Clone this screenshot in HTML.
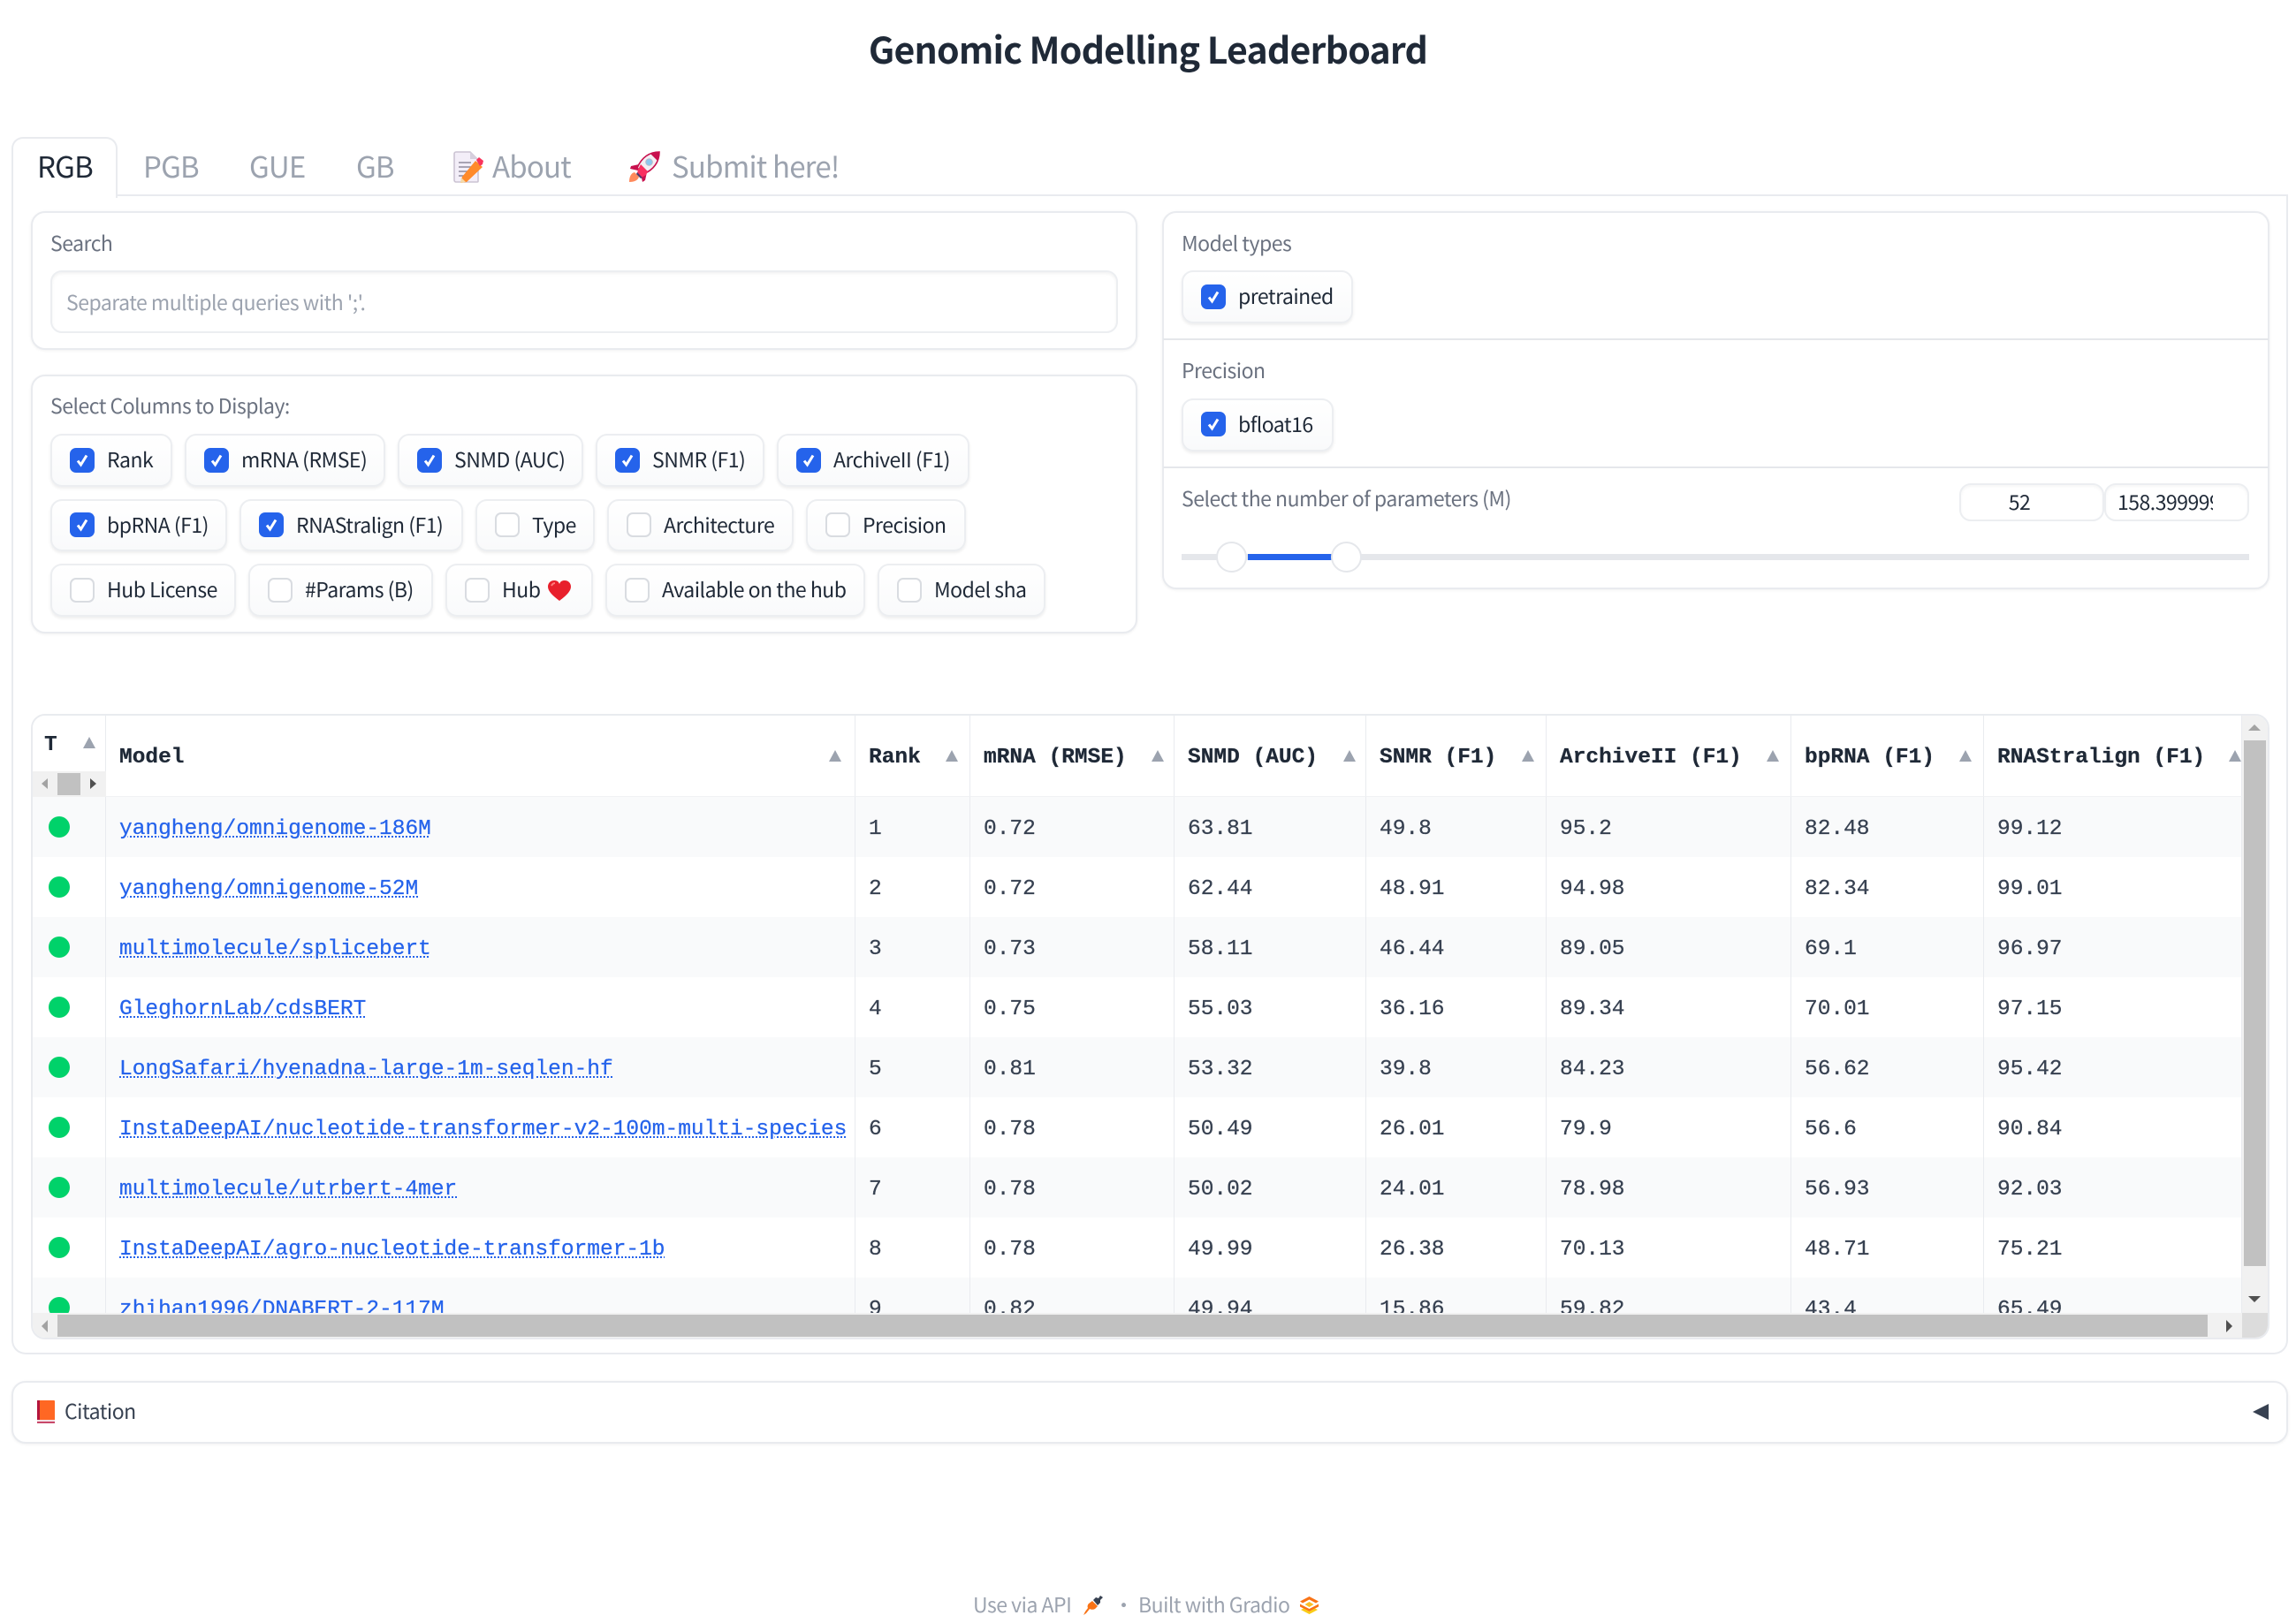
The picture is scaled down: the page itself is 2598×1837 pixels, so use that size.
<!DOCTYPE html>
<html lang="en">
<head>
<meta charset="utf-8">
<title>Genomic Modelling Leaderboard</title>
<style>
html,body{margin:0;padding:0;background:#fff}
body{position:relative;width:2598px;height:1837px;overflow:hidden;font-family:"Noto Sans CJK SC","Liberation Sans",sans-serif;color:#1f2937}
.a{position:absolute;box-sizing:border-box}
.t{position:absolute;white-space:nowrap;line-height:40px;height:40px;letter-spacing:-.5px}
.card{position:absolute;box-sizing:border-box;background:#fff;border:2px solid #e9ebef;border-radius:16px;box-shadow:0 1px 3px rgba(0,0,0,.06)}
.lb{font-size:23px;color:#6b7280}
.tab{font-size:33px;color:#9ca3af;letter-spacing:-.8px}
.chip{position:absolute;box-sizing:border-box;border:2px solid #eceef1;border-radius:13px;background:linear-gradient(#fff,#f9fafb);box-shadow:0 2px 3px rgba(0,0,0,.07)}
.ct{position:absolute;white-space:nowrap;font-size:23px;letter-spacing:-.5px;line-height:40px;height:40px;color:#1f2937}
.cb{position:absolute;box-sizing:border-box;width:28px;height:28px;border-radius:7px;background:#2563eb}
.cb svg{position:absolute;left:4px;top:5px}
.ub{position:absolute;box-sizing:border-box;width:28px;height:28px;border-radius:7px;background:#fff;border:2px solid #d9dce1}
.tw{position:absolute;left:35px;top:808px;width:2533px;height:708px;box-sizing:border-box;border:2px solid #e9ebef;border-radius:16px;overflow:hidden;background:#fff}
table{position:absolute;left:-1px;top:0;border-collapse:separate;border-spacing:0;table-layout:fixed;width:2501px;font-family:"Liberation Mono",monospace;font-size:24.5px;color:#374151;-webkit-text-stroke:.25px}
th{height:92px;padding:4px 0 0 15px;text-align:left;font-weight:700;color:#1f2937;border-right:1px solid #e9ebef;border-bottom:1px solid #f1f2f4;background:#fff;box-sizing:border-box}
td{height:68px;padding:4px 0 0 15px;border-right:1px solid #e9ebef;box-sizing:border-box;white-space:nowrap;overflow:hidden}
tr:nth-child(odd) td{background:#f9fafb}
td a{color:#2563eb;text-decoration:underline dotted 2px;text-underline-offset:3px}
.d{display:block;position:relative;top:-2px;width:24px;height:24px;border-radius:50%;background:#00d26a;margin-left:4px}
.tri{position:absolute;top:849px;width:0;height:0;border-left:7.5px solid transparent;border-right:7.5px solid transparent;border-bottom:13px solid #9ca3af}
</style>
</head>
<body>

<div class="t" style="left:0;width:2598px;text-align:center;top:30px;height:48px;line-height:48px;font-size:41px;font-weight:700;letter-spacing:-.8px;color:#1f2937">Genomic Modelling Leaderboard</div>

<!-- tabs -->
<div class="a" style="left:13px;top:221px;width:2576px;height:1312px;border:2px solid #e9ebef;border-top:none;border-radius:0 0 16px 16px"></div>
<div class="a" style="left:13px;top:220px;width:2576px;height:2px;background:#e9ebef"></div>
<div class="a" style="left:13px;top:155px;width:120px;height:69px;background:#fff;border:2px solid #e9ebef;border-bottom:none;border-radius:13px 13px 0 0"></div>
<div class="t tab" style="left:42px;top:167px;color:#1f2937">RGB</div>
<div class="t tab" style="left:162px;top:167px">PGB</div>
<div class="t tab" style="left:282px;top:167px">GUE</div>
<div class="t tab" style="left:403px;top:167px">GB</div>
<svg class="a" style="left:513px;top:171px" width="34" height="36" viewBox="0 0 34 36">
<path d="M1 3a2 2 0 0 1 2-2h16l9 9v24a1 1 0 0 1-1 1H3a2 2 0 0 1-2-2z" fill="#f3eef8" stroke="#cbc3d3" stroke-width="1.6"/>
<path d="M19 1v8h9z" fill="#d6cfdd"/>
<path d="M6 13h14M6 18h15M6 23h10M6 28h7" stroke="#8f8a9c" stroke-width="1.5"/>
<path d="M25 11l8 7-18 17-7 1 2-7z" fill="#ff8a2a"/>
<path d="M26 10l3-3 5 4-1 4-3 2z" fill="#f9345c"/>
<path d="M8 36l1-6 5 5z" fill="#f5d9a8"/>
</svg>
<div class="t tab" style="left:557px;top:167px">About</div>
<svg class="a" style="left:711px;top:171px" width="36" height="36" viewBox="0 0 36 36">
<path d="M1 35c0-6 2-10 6-11l5 5c-1 4-5 6-11 6z" fill="#ff8a5c"/>
<path d="M12 15L3 17l-1 3 9 2z" fill="#c8104e"/>
<path d="M21 24l-2 9-3 2-2-9z" fill="#c8104e"/>
<path d="M35 1C24 1 15 7 10 19l7 7c12-5 18-14 18-25z" fill="#f3eef3" stroke="#c8104e" stroke-width="1.6"/>
<path d="M35 1c-4 0-7 1-10 2l8 8c1-3 2-6 2-10z" fill="#c8104e"/>
<circle cx="23.500" cy="12.500" r="3.800" fill="#8cc8ee" stroke="#b8bcc8" stroke-width="1"/>
<path d="M14 15l-3 6-1 4 5 5 5-3 2-4z" fill="#f92f60"/>
<path d="M10 24l6 6-2 1-5-5z" fill="#4b3a6b"/>
</svg>
<div class="t tab" style="left:760px;top:167px">Submit here!</div>

<!-- search -->
<div class="card" style="left:35px;top:239px;width:1252px;height:157px"></div>
<div class="t lb" style="left:57px;top:254px">Search</div>
<div class="a" style="left:57px;top:306px;width:1208px;height:71px;border:2px solid #eceef1;border-radius:13px;background:#fff;box-shadow:inset 0 2px 3px rgba(0,0,0,.05)"></div>
<div class="t" style="left:75px;top:321px;font-size:23px;color:#9ca3af">Separate multiple queries with ';'.</div>

<!-- columns -->
<div class="card" style="left:35px;top:424px;width:1252px;height:293px"></div>
<div class="t lb" style="left:57px;top:438px">Select Columns to Display:</div>

<div class="chip" style="left:57px;top:491px;width:138px;height:60px"></div><div class="cb" style="left:79px;top:507px"><svg width="20" height="18" viewBox="0 0 20 18"><path d="M5 9.500l3.500 4.500L15 3.500" fill="none" stroke="#fff" stroke-width="3"/></svg></div><div class="ct" style="left:121px;top:499px">Rank</div>
<div class="chip" style="left:209px;top:491px;width:227px;height:60px"></div><div class="cb" style="left:231px;top:507px"><svg width="20" height="18" viewBox="0 0 20 18"><path d="M5 9.500l3.500 4.500L15 3.500" fill="none" stroke="#fff" stroke-width="3"/></svg></div><div class="ct" style="left:273px;top:499px">mRNA (RMSE)</div>
<div class="chip" style="left:450px;top:491px;width:210px;height:60px"></div><div class="cb" style="left:472px;top:507px"><svg width="20" height="18" viewBox="0 0 20 18"><path d="M5 9.500l3.500 4.500L15 3.500" fill="none" stroke="#fff" stroke-width="3"/></svg></div><div class="ct" style="left:514px;top:499px">SNMD (AUC)</div>
<div class="chip" style="left:674px;top:491px;width:191px;height:60px"></div><div class="cb" style="left:696px;top:507px"><svg width="20" height="18" viewBox="0 0 20 18"><path d="M5 9.500l3.500 4.500L15 3.500" fill="none" stroke="#fff" stroke-width="3"/></svg></div><div class="ct" style="left:738px;top:499px">SNMR (F1)</div>
<div class="chip" style="left:879px;top:491px;width:218px;height:60px"></div><div class="cb" style="left:901px;top:507px"><svg width="20" height="18" viewBox="0 0 20 18"><path d="M5 9.500l3.500 4.500L15 3.500" fill="none" stroke="#fff" stroke-width="3"/></svg></div><div class="ct" style="left:943px;top:499px">ArchiveII (F1)</div>

<div class="chip" style="left:57px;top:565px;width:200px;height:59px"></div><div class="cb" style="left:79px;top:580px"><svg width="20" height="18" viewBox="0 0 20 18"><path d="M5 9.500l3.500 4.500L15 3.500" fill="none" stroke="#fff" stroke-width="3"/></svg></div><div class="ct" style="left:121px;top:573px">bpRNA (F1)</div>
<div class="chip" style="left:271px;top:565px;width:253px;height:59px"></div><div class="cb" style="left:293px;top:580px"><svg width="20" height="18" viewBox="0 0 20 18"><path d="M5 9.500l3.500 4.500L15 3.500" fill="none" stroke="#fff" stroke-width="3"/></svg></div><div class="ct" style="left:335px;top:573px">RNAStralign (F1)</div>
<div class="chip" style="left:538px;top:565px;width:135px;height:59px"></div><div class="ub" style="left:560px;top:580px"></div><div class="ct" style="left:602px;top:573px">Type</div>
<div class="chip" style="left:687px;top:565px;width:211px;height:59px"></div><div class="ub" style="left:709px;top:580px"></div><div class="ct" style="left:751px;top:573px">Architecture</div>
<div class="chip" style="left:912px;top:565px;width:181px;height:59px"></div><div class="ub" style="left:934px;top:580px"></div><div class="ct" style="left:976px;top:573px">Precision</div>

<div class="chip" style="left:57px;top:638px;width:210px;height:60px"></div><div class="ub" style="left:79px;top:654px"></div><div class="ct" style="left:121px;top:646px">Hub License</div>
<div class="chip" style="left:281px;top:638px;width:209px;height:60px"></div><div class="ub" style="left:303px;top:654px"></div><div class="ct" style="left:345px;top:646px">#Params (B)</div>
<div class="chip" style="left:504px;top:638px;width:167px;height:60px"></div><div class="ub" style="left:526px;top:654px"></div><div class="ct" style="left:568px;top:646px">Hub</div>
<svg class="a" style="left:620px;top:657px" width="26" height="23" viewBox="0 0 26 23"><path d="M13 23C5 17 0 12 0 7c0-4 3-7 7-7 3 0 5 1 6 4 1-3 3-4 6-4 4 0 7 3 7 7 0 5-5 10-13 16z" fill="#e8202c"/><path d="M4 6c1-2 2-3 4-3" stroke="#ff7b7b" stroke-width="2" fill="none"/></svg>
<div class="chip" style="left:685px;top:638px;width:294px;height:60px"></div><div class="ub" style="left:707px;top:654px"></div><div class="ct" style="left:749px;top:646px">Available on the hub</div>
<div class="chip" style="left:993px;top:638px;width:190px;height:60px"></div><div class="ub" style="left:1015px;top:654px"></div><div class="ct" style="left:1057px;top:646px">Model sha</div>

<!-- right card -->
<div class="card" style="left:1315px;top:239px;width:1253px;height:428px"></div>
<div class="a" style="left:1316px;top:383px;width:1251px;height:2px;background:#e5e7eb"></div>
<div class="a" style="left:1316px;top:528px;width:1251px;height:2px;background:#e5e7eb"></div>
<div class="t lb" style="left:1337px;top:254px">Model types</div>
<div class="chip" style="left:1337px;top:306px;width:194px;height:60px"></div><div class="cb" style="left:1359px;top:322px"><svg width="20" height="18" viewBox="0 0 20 18"><path d="M5 9.500l3.500 4.500L15 3.500" fill="none" stroke="#fff" stroke-width="3"/></svg></div><div class="ct" style="left:1401px;top:314px">pretrained</div>
<div class="t lb" style="left:1337px;top:398px">Precision</div>
<div class="chip" style="left:1337px;top:451px;width:172px;height:60px"></div><div class="cb" style="left:1359px;top:466px"><svg width="20" height="18" viewBox="0 0 20 18"><path d="M5 9.500l3.500 4.500L15 3.500" fill="none" stroke="#fff" stroke-width="3"/></svg></div><div class="ct" style="left:1401px;top:459px">bfloat16</div>
<div class="t lb" style="left:1337px;top:543px">Select the number of parameters (M)</div>
<div class="a" style="left:2217px;top:547px;width:164px;height:43px;border:2px solid #eceef1;border-radius:13px;box-shadow:inset 0 2px 3px rgba(0,0,0,.04)"></div>
<div class="a" style="left:2381px;top:547px;width:164px;height:43px;border:2px solid #eceef1;border-radius:13px;box-shadow:inset 0 2px 3px rgba(0,0,0,.04)"></div>
<div class="t" style="left:2217px;width:136px;text-align:center;top:547px;font-size:23px">52</div>
<div class="t" style="left:2396px;width:108px;overflow:hidden;top:547px;font-size:23px">158.399999</div>
<div class="a" style="left:1337px;top:627px;width:1208px;height:7px;background:#e5e7eb"></div>
<div class="a" style="left:1412px;top:627px;width:96px;height:7px;background:#2563eb"></div>
<div class="a" style="left:1376px;top:613px;width:35px;height:35px;border-radius:50%;background:#fff;border:2px solid #e5e7eb"></div>
<div class="a" style="left:1506px;top:613px;width:35px;height:35px;border-radius:50%;background:#fff;border:2px solid #e5e7eb"></div>

<!-- results card -->
<div class="tw">
<table>
<colgroup><col style="width:84px"><col style="width:848px"><col style="width:130px"><col style="width:231px"><col style="width:217px"><col style="width:204px"><col style="width:277px"><col style="width:218px"><col style="width:292px"></colgroup>
<thead><tr><th></th><th>Model</th><th>Rank</th><th>mRNA (RMSE)</th><th>SNMD (AUC)</th><th>SNMR (F1)</th><th>ArchiveII (F1)</th><th>bpRNA (F1)</th><th>RNAStralign (F1)</th></tr></thead>
<tbody>
<tr><td><span class="d"></span></td><td><a>yangheng/omnigenome-186M</a></td><td>1</td><td>0.72</td><td>63.81</td><td>49.8</td><td>95.2</td><td>82.48</td><td>99.12</td></tr>
<tr><td><span class="d"></span></td><td><a>yangheng/omnigenome-52M</a></td><td>2</td><td>0.72</td><td>62.44</td><td>48.91</td><td>94.98</td><td>82.34</td><td>99.01</td></tr>
<tr><td><span class="d"></span></td><td><a>multimolecule/splicebert</a></td><td>3</td><td>0.73</td><td>58.11</td><td>46.44</td><td>89.05</td><td>69.1</td><td>96.97</td></tr>
<tr><td><span class="d"></span></td><td><a>GleghornLab/cdsBERT</a></td><td>4</td><td>0.75</td><td>55.03</td><td>36.16</td><td>89.34</td><td>70.01</td><td>97.15</td></tr>
<tr><td><span class="d"></span></td><td><a>LongSafari/hyenadna-large-1m-seqlen-hf</a></td><td>5</td><td>0.81</td><td>53.32</td><td>39.8</td><td>84.23</td><td>56.62</td><td>95.42</td></tr>
<tr><td><span class="d"></span></td><td><a>InstaDeepAI/nucleotide-transformer-v2-100m-multi-species</a></td><td>6</td><td>0.78</td><td>50.49</td><td>26.01</td><td>79.9</td><td>56.6</td><td>90.84</td></tr>
<tr><td><span class="d"></span></td><td><a>multimolecule/utrbert-4mer</a></td><td>7</td><td>0.78</td><td>50.02</td><td>24.01</td><td>78.98</td><td>56.93</td><td>92.03</td></tr>
<tr><td><span class="d"></span></td><td><a>InstaDeepAI/agro-nucleotide-transformer-1b</a></td><td>8</td><td>0.78</td><td>49.99</td><td>26.38</td><td>70.13</td><td>48.71</td><td>75.21</td></tr>
<tr><td><span class="d"></span></td><td><a>zhihan1996/DNABERT-2-117M</a></td><td>9</td><td>0.82</td><td>49.94</td><td>15.86</td><td>59.82</td><td>43.4</td><td>65.49</td></tr>
</tbody>
</table>
<!-- vertical scrollbar -->
<div class="a" style="left:2500px;top:0;width:30px;height:678px;background:#f1f1f1"></div>
<div class="a" style="left:2502px;top:28px;width:25px;height:595px;background:#c1c1c1"></div>
<div class="a" style="left:2507px;top:10px;width:0;height:0;border-left:7px solid transparent;border-right:7px solid transparent;border-bottom:7px solid #a3a3a3"></div>
<div class="a" style="left:2507px;top:657px;width:0;height:0;border-left:7px solid transparent;border-right:7px solid transparent;border-top:7px solid #505050"></div>
<!-- horizontal scrollbar -->
<div class="a" style="left:0;top:676px;width:2500px;height:30px;background:#f1f1f1"></div>
<div class="a" style="left:28px;top:678px;width:2433px;height:25px;background:#c1c1c1"></div>
<div class="a" style="left:10px;top:684px;width:0;height:0;border-top:7px solid transparent;border-bottom:7px solid transparent;border-right:7px solid #a3a3a3"></div>
<div class="a" style="left:2482px;top:684px;width:0;height:0;border-top:7px solid transparent;border-bottom:7px solid transparent;border-left:7px solid #505050"></div>
<div class="a" style="left:2500px;top:676px;width:30px;height:30px;background:#dcdcdc"></div>
<!-- first-column scrollbar -->
<div class="a" style="left:0;top:63px;width:83px;height:29px;background:#f1f1f1"></div>
<div class="a" style="left:28px;top:65px;width:26px;height:25px;background:#c1c1c1"></div>
<div class="a" style="left:10px;top:71px;width:0;height:0;border-top:6.500px solid transparent;border-bottom:6.500px solid transparent;border-right:7px solid #a3a3a3"></div>
<div class="a" style="left:65px;top:71px;width:0;height:0;border-top:6.500px solid transparent;border-bottom:6.500px solid transparent;border-left:7px solid #505050"></div>
</div>
<div class="t" style="left:50px;top:824px;font-family:'Liberation Mono',monospace;font-weight:700;font-size:24.5px;letter-spacing:0;color:#1f2937">T</div>
<div class="tri" style="left:94px;top:834px"></div>
<div class="tri" style="left:938px"></div>
<div class="tri" style="left:1070px"></div>
<div class="tri" style="left:1303px"></div>
<div class="tri" style="left:1520px"></div>
<div class="tri" style="left:1722px"></div>
<div class="tri" style="left:1999px"></div>
<div class="tri" style="left:2217px"></div>
<div class="tri" style="left:2522px"></div>

<!-- citation -->
<div class="card" style="left:13px;top:1563px;width:2576px;height:71px"></div>
<svg class="a" style="left:42px;top:1585px" width="20" height="26" viewBox="0 0 20 26"><rect x="0" y="0" width="20" height="25" rx="1" fill="#ff6723"/><rect x="0" y="0" width="3" height="25" fill="#b4153d"/><rect x="0" y="22" width="20" height="2" fill="#f4dfe2"/><rect x="0" y="24" width="20" height="2" fill="#c8486a"/></svg>
<div class="t" style="left:73px;top:1576px;font-size:23px;color:#374151">Citation</div>
<div class="a" style="left:2549px;top:1589px;width:0;height:0;border-top:9.500px solid transparent;border-bottom:9.500px solid transparent;border-right:18px solid #374151"></div>

<!-- footer -->
<div class="t" style="left:1101px;top:1795px;font-size:23px;color:#9ca3af">Use via API</div>
<svg class="a" style="left:1226px;top:1806px" width="22" height="22" viewBox="0 0 22 22"><path d="M11 5l3-3 3 1 2-3 3 2-3 3 0 3-3 3z" fill="#374151"/><path d="M10 6l6 6-3 3c-2 1-4 1-6 0l-4 5-3 2 2-4 3-4c-1-2 0-4 1-5z" fill="#f97316"/></svg>
<div class="t" style="left:1260px;top:1795px;font-size:23px;color:#9ca3af">·</div>
<div class="t" style="left:1288px;top:1795px;font-size:23px;color:#9ca3af">Built with Gradio</div>
<svg class="a" style="left:1470px;top:1806px" width="23" height="22" viewBox="0 0 23 22"><path d="M11.500 1L22 6.500l-3 2L11.500 4.500 4 8.500l-3-2z" fill="#f97316"/><path d="M1 9.500L11.500 15 22 9.500v3L11.500 18 1 12.500z" fill="#f97316"/><path d="M5 14.500L11.500 18l6.500-3.500 3 1.500L11.500 21 2 16z" fill="#facc15"/><path d="M11.500 7l5 3-5 3-5-3z" fill="#fbbf24"/></svg>

</body>
</html>
